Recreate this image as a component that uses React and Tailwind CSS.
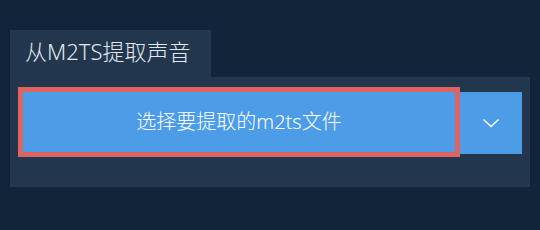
import React from 'react';

const App = () => {
  return (
    <div
      className="w-[540px] h-[230px] bg-[#11243a] pt-[30px] px-[10px]"
      style={{ fontFamily: '"Noto Sans", "Noto Sans CJK SC", sans-serif' }}
    >
      <div className="w-[201px] h-[47px] bg-[#22374d] flex items-center pl-[15px] pb-[5px]">
        <span className="text-[22px] font-light text-[#e3e8ee] leading-none">从M2TS提取声音</span>
      </div>
      <div className="w-[520px] h-[110px] bg-[#22374d] pl-[8px] pt-[10px] flex items-start">
        <button className="w-[442px] h-[70px] border-[5px] border-[#df6360] bg-[#4c9ce8] flex items-center justify-center text-white text-[20px] font-light">
          选择要提取的m2ts文件
        </button>
        <button className="w-[62px] h-[62px] mt-[5px] bg-[#4c9ce8] flex items-center justify-center">
          <svg width="18" height="10" viewBox="0 0 18 10" fill="none">
            <path d="M1.5 1.5 L9 8.5 L16.5 1.5" stroke="white" strokeWidth="1.5" />
          </svg>
        </button>
      </div>
    </div>
  );
};

export default App;
